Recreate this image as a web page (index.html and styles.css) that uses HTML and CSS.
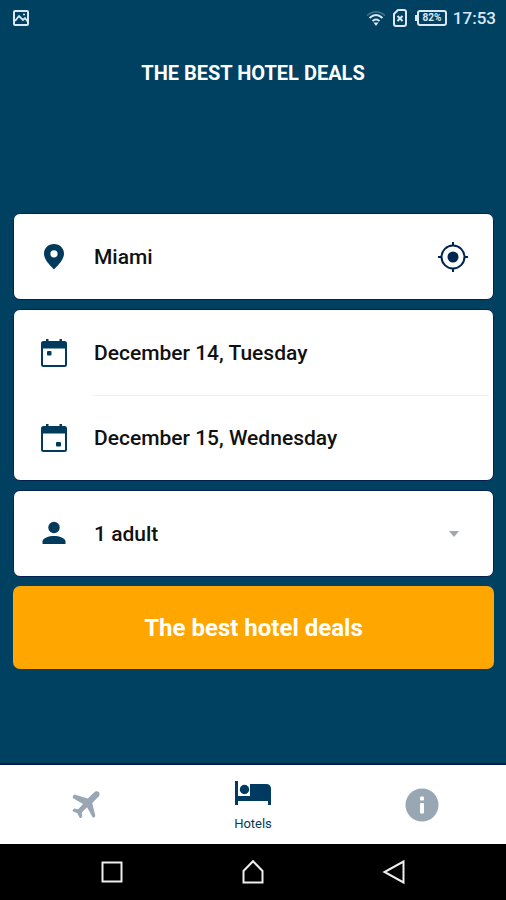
FILE: index.html
```html
<!DOCTYPE html>
<html lang="en">
<head>
<meta charset="utf-8">
<meta name="viewport" content="width=device-width, initial-scale=1">
<title>The best hotel deals</title>
<link rel="stylesheet" href="styles.css">
</head>
<body>
<header>
  <div class="status">
    <svg class="status-picture" width="18" height="18" viewBox="0 0 18 18" fill="none" stroke="currentColor" stroke-width="2"><rect x="2" y="2" width="14" height="14" rx="1"/><path d="M3 12l4-5 4 4 2-2 3 4" stroke-width="1.8"/><circle cx="12" cy="5.500" r="1" fill="currentColor" stroke="none"/></svg>
    <div class="status-right">
      <svg width="20" height="18" viewBox="0 0 20 18" fill="none" stroke="currentColor" stroke-width="2"><path d="M1 6.500Q10-1 19 6.500" opacity=".3" stroke-width="1.500"/><path d="M3.500 9Q10 3 16.500 9M6.500 12Q10 9 13.500 12"/><path d="M7.500 13.500h5L10 17z" fill="currentColor" stroke="none"/></svg>
      <svg width="16" height="20" viewBox="0 0 16 20" fill="none" stroke="currentColor" stroke-width="2"><path d="M6 2h6q2 0 2 2v12q0 2-2 2H4q-2 0-2-2V6z"/><path d="M5.500 8l5 5m0-5l-5 5"/></svg>
      <span class="battery">82%</span>
      <time>17:53</time>
    </div>
  </div>
  <h1>THE BEST HOTEL DEALS</h1>
</header>

<main>
  <form>
    <div class="card">
      <div class="row">
        <label class="icon" for="city" aria-label="City"><svg width="28" height="32" viewBox="0 0 28 32"><path fill="currentColor" fill-rule="evenodd" d="M14 3C8.300 3 4 7.200 4 12.500 4 18.500 9 23 14 28.500 19 23 24 18.500 24 12.500 24 7.200 19.700 3 14 3zm0 6.200a3.600 3.600 0 1 1 0 7.200 3.600 3.600 0 0 1 0-7.200z"/></svg></label>
        <input class="field" id="city" type="text" value="Miami">
        <button class="locate" type="button" aria-label="Use my location"><svg width="32" height="32" viewBox="0 0 32 32" fill="none" stroke="currentColor" stroke-width="2"><circle cx="16" cy="16" r="11.500"/><circle cx="16" cy="16" r="5.500" fill="currentColor" stroke="none"/><path d="M16 1v4M16 27v4M1 16h4M27 16h4"/></svg></button>
      </div>
    </div>
    <div class="card">
      <div class="row">
        <label class="icon" for="arrive" aria-label="Check-in"><svg width="28" height="32" viewBox="0 0 28 32" fill="currentColor"><path fill-rule="evenodd" d="M3.500 4H6V2h2.500v2h11V2H22v2h2.500Q27 4 27 6.500v21q0 2.500-2.500 2.500h-21Q1 30 1 27.500v-21Q1 4 3.500 4zM3 11.500V28h22V11.500z"/><rect x="7" y="14" width="4.500" height="4.500" rx="1"/></svg></label>
        <input class="field" id="arrive" type="text" value="December 14, Tuesday">
      </div>
      <div class="row divided">
        <label class="icon" for="leave" aria-label="Check-out"><svg width="28" height="32" viewBox="0 0 28 32" fill="currentColor"><path fill-rule="evenodd" d="M3.500 4H6V2h2.500v2h11V2H22v2h2.500Q27 4 27 6.500v21q0 2.500-2.500 2.500h-21Q1 30 1 27.500v-21Q1 4 3.500 4zM3 11.500V28h22V11.500z"/><rect x="16" y="20" width="5" height="4.500" rx="1"/></svg></label>
        <input class="field" id="leave" type="text" value="December 15, Wednesday">
      </div>
    </div>
    <div class="card">
      <div class="row guests">
        <label class="icon" for="guests" aria-label="Guests"><svg width="28" height="32" viewBox="0 0 28 32" fill="currentColor"><circle cx="14" cy="9.500" r="5.700"/><path d="M2.500 26v-2.500C2.500 20 9 18 14 18s11.500 2 11.500 5.500V26z"/></svg></label>
        <select class="field" id="guests"><option>1 adult</option></select>
        <svg class="caret" width="12" height="6" viewBox="0 0 12 6"><path d="M1 0h10L6 6z" fill="currentColor"/></svg>
      </div>
    </div>
    <button class="submit" type="submit">The best hotel deals</button>
  </form>
</main>

<nav class="tabs">
  <a href="#flights" aria-label="Flights"><svg width="32" height="32" viewBox="0 0 32 32" fill="currentColor"><path d="M30.800 2.900c-1.600-1.200-3.500-.5-4.700.6L19.800 9.400 6.500 5.600 4.800 7v2l10.200 6-4.800 5.200-4-.6-1.600 1.600.2 1L9.300 24.300l2.500 4.700h1.300l1.200-1.500-.5-4L19 18.300l5.800 10.200h1.400l1.200-1.400-3.200-13 6.200-6.300c1.200-1.300 1.700-3.500.4-4.900z"/></svg></a>
  <a class="active" href="#hotels"><svg width="38" height="26" viewBox="0 0 38 26" fill="currentColor"><path d="M1 1h3v15h12V4h16q5 0 5 5v16h-3v-4H4v4H1z"/><circle cx="10.500" cy="9.500" r="4.700"/></svg><span>Hotels</span></a>
  <a href="#info" aria-label="Info"><svg width="34" height="34" viewBox="0 0 34 34"><circle cx="17" cy="17" r="16.500" fill="currentColor"/><rect x="15" y="8.500" width="4" height="4" rx="1" fill="#fff"/><rect x="15" y="15" width="4" height="10.500" rx="1" fill="#fff"/></svg></a>
</nav>

<div class="system">
  <button type="button" aria-label="Recent apps"><svg width="26" height="26" viewBox="0 0 26 26"><rect x="3.500" y="3.500" width="19" height="19"/></svg></button>
  <button type="button" aria-label="Home"><svg width="26" height="26" viewBox="0 0 26 26"><path d="M3.500 23.500V12L13 2.200 22.500 12v11.500z"/></svg></button>
  <button type="button" aria-label="Back"><svg width="26" height="26" viewBox="0 0 26 26"><path d="M22.500 2.500v21L3.500 13z"/></svg></button>
</div>
</body>
</html>
```
FILE: styles.css
```css
* { box-sizing: border-box; }

body {
  margin: 0;
  min-height: 100vh;
  display: flex;
  flex-direction: column;
  background: #004162;
  color: #fff;
  font-family: Roboto, "Liberation Sans", sans-serif;
}

svg { display: block; flex: none; }

button {
  border: 0;
  padding: 0;
  background: none;
  color: inherit;
  font: inherit;
}

.status {
  display: flex;
  justify-content: space-between;
  align-items: center;
  height: 36px;
  padding: 0 10px 0 12px;
  color: #dce8f4;
}

.status-right {
  display: flex;
  align-items: center;
  gap: 6px;
  font-size: 17px;
  font-weight: 500;
}

.battery {
  position: relative;
  width: 30px;
  margin-left: 3px;
  border: 2px solid;
  border-radius: 3px;
  font-size: 10px;
  line-height: 12px;
  font-weight: 700;
  text-align: center;
}

.battery::before {
  content: "";
  position: absolute;
  left: -4px;
  top: 3px;
  width: 2px;
  height: 6px;
  background: currentColor;
}

h1 {
  margin: 24px 0 0;
  font-size: 20px;
  line-height: 26px;
  font-weight: 700;
  text-align: center;
}

main {
  flex: 1;
  display: flex;
  flex-direction: column;
  justify-content: flex-end;
  padding: 32px 12px 96px 13px;
}

form {
  display: flex;
  flex-direction: column;
  gap: 9px;
}

.card {
  border: 1px solid #042050;
  border-radius: 7px;
  background: #fff;
  color: #003a5c;
}

.row {
  position: relative;
  display: flex;
  align-items: center;
  height: 85px;
  padding: 0 24px 0 26px;
}

.icon { margin-right: 26px; }

.divided::before {
  content: "";
  position: absolute;
  top: 0;
  left: 78px;
  right: 4px;
  height: 1px;
  background: #f0f0f0;
}

.field {
  flex: 1;
  min-width: 0;
  height: 48px;
  padding: 0;
  border: 0;
  background: none;
  appearance: none;
  color: #111;
  font: 500 21px Roboto, "Liberation Sans", sans-serif;
}

.locate { color: #00264f; }

.caret {
  margin-right: 9px;
  color: #a2a8b0;
}

.submit {
  height: 83px;
  border-radius: 7px;
  background: #ffa600;
  color: #fff;
  font-size: 24px;
  font-weight: 700;
}

.tabs {
  display: grid;
  grid-template-columns: repeat(3, 1fr);
  height: 79px;
  background: #fff;
  box-shadow: 0 -2px 0 #04184e;
}

.tabs a {
  display: flex;
  flex-direction: column;
  align-items: center;
  justify-content: center;
  gap: 10px;
  color: #99a6b4;
  text-decoration: none;
  font-size: 13px;
  line-height: 16px;
}

.tabs .active {
  padding-top: 3px;
  color: #003a60;
}

.system {
  display: flex;
  justify-content: center;
  align-items: center;
  gap: 115px;
  height: 56px;
  background: #000;
}

.system svg {
  fill: none;
  stroke: #eee;
  stroke-width: 2;
}
```
